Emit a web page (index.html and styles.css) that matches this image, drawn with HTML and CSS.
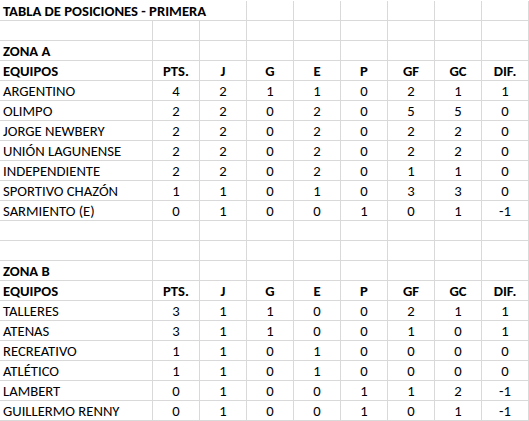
FILE: index.html
```html
<!DOCTYPE html>
<html lang="es">
<head>
<meta charset="utf-8">
<title>Tabla de posiciones - Primera</title>
<link rel="stylesheet" href="styles.css">
</head>
<body>
<div class="sheet">
  <div class="row title-row"><div class="title">TABLA DE POSICIONES - PRIMERA</div><div class="c"></div><div class="c"></div><div class="c"></div><div class="c"></div><div class="c"></div><div class="c"></div></div>
  <div class="row"><div class="a"></div><div class="c"></div><div class="c"></div><div class="c"></div><div class="c"></div><div class="c"></div><div class="c"></div><div class="c"></div><div class="c"></div></div>
  <div class="row"><div class="a b">ZONA A</div><div class="c"></div><div class="c"></div><div class="c"></div><div class="c"></div><div class="c"></div><div class="c"></div><div class="c"></div><div class="c"></div></div>
  <div class="row head"><div class="a">EQUIPOS</div><div class="c">PTS.</div><div class="c">J</div><div class="c">G</div><div class="c">E</div><div class="c">P</div><div class="c">GF</div><div class="c">GC</div><div class="c">DIF.</div></div>
  <div class="row"><div class="a">ARGENTINO</div><div class="c">4</div><div class="c">2</div><div class="c">1</div><div class="c">1</div><div class="c">0</div><div class="c">2</div><div class="c">1</div><div class="c">1</div></div>
  <div class="row"><div class="a">OLIMPO</div><div class="c">2</div><div class="c">2</div><div class="c">0</div><div class="c">2</div><div class="c">0</div><div class="c">5</div><div class="c">5</div><div class="c">0</div></div>
  <div class="row"><div class="a">JORGE NEWBERY</div><div class="c">2</div><div class="c">2</div><div class="c">0</div><div class="c">2</div><div class="c">0</div><div class="c">2</div><div class="c">2</div><div class="c">0</div></div>
  <div class="row"><div class="a">UNIÓN LAGUNENSE</div><div class="c">2</div><div class="c">2</div><div class="c">0</div><div class="c">2</div><div class="c">0</div><div class="c">2</div><div class="c">2</div><div class="c">0</div></div>
  <div class="row"><div class="a">INDEPENDIENTE</div><div class="c">2</div><div class="c">2</div><div class="c">0</div><div class="c">2</div><div class="c">0</div><div class="c">1</div><div class="c">1</div><div class="c">0</div></div>
  <div class="row"><div class="a">SPORTIVO CHAZÓN</div><div class="c">1</div><div class="c">1</div><div class="c">0</div><div class="c">1</div><div class="c">0</div><div class="c">3</div><div class="c">3</div><div class="c">0</div></div>
  <div class="row"><div class="a">SARMIENTO (E)</div><div class="c">0</div><div class="c">1</div><div class="c">0</div><div class="c">0</div><div class="c">1</div><div class="c">0</div><div class="c">1</div><div class="c">-1</div></div>
  <div class="row"><div class="a"></div><div class="c"></div><div class="c"></div><div class="c"></div><div class="c"></div><div class="c"></div><div class="c"></div><div class="c"></div><div class="c"></div></div>
  <div class="row"><div class="a"></div><div class="c"></div><div class="c"></div><div class="c"></div><div class="c"></div><div class="c"></div><div class="c"></div><div class="c"></div><div class="c"></div></div>
  <div class="row"><div class="a b">ZONA B</div><div class="c"></div><div class="c"></div><div class="c"></div><div class="c"></div><div class="c"></div><div class="c"></div><div class="c"></div><div class="c"></div></div>
  <div class="row head"><div class="a">EQUIPOS</div><div class="c">PTS.</div><div class="c">J</div><div class="c">G</div><div class="c">E</div><div class="c">P</div><div class="c">GF</div><div class="c">GC</div><div class="c">DIF.</div></div>
  <div class="row"><div class="a">TALLERES</div><div class="c">3</div><div class="c">1</div><div class="c">1</div><div class="c">0</div><div class="c">0</div><div class="c">2</div><div class="c">1</div><div class="c">1</div></div>
  <div class="row"><div class="a">ATENAS</div><div class="c">3</div><div class="c">1</div><div class="c">1</div><div class="c">0</div><div class="c">0</div><div class="c">1</div><div class="c">0</div><div class="c">1</div></div>
  <div class="row"><div class="a">RECREATIVO</div><div class="c">1</div><div class="c">1</div><div class="c">0</div><div class="c">1</div><div class="c">0</div><div class="c">0</div><div class="c">0</div><div class="c">0</div></div>
  <div class="row"><div class="a">ATLÉTICO</div><div class="c">1</div><div class="c">1</div><div class="c">0</div><div class="c">1</div><div class="c">0</div><div class="c">0</div><div class="c">0</div><div class="c">0</div></div>
  <div class="row"><div class="a">LAMBERT</div><div class="c">0</div><div class="c">1</div><div class="c">0</div><div class="c">0</div><div class="c">1</div><div class="c">1</div><div class="c">2</div><div class="c">-1</div></div>
  <div class="row"><div class="a">GUILLERMO RENNY</div><div class="c">0</div><div class="c">1</div><div class="c">0</div><div class="c">0</div><div class="c">1</div><div class="c">0</div><div class="c">1</div><div class="c">-1</div></div>
</div>
</body>
</html>
```
FILE: styles.css
```css
html, body {
  margin: 0;
  padding: 0;
  background: #ffffff;
}

.sheet {
  padding-top: 1px;
  width: 529px;
  font-family: Carlito, Calibri, Lato, "Open Sans", sans-serif;
  font-size: 14.67px;
  color: #000000;
}

.row {
  display: grid;
  grid-template-columns: 153px repeat(8, 47px);
  height: 20px;
}

.row > div {
  box-sizing: border-box;
  height: 20px;
  border-right: 1px solid #d9d9d9;
  border-bottom: 1px solid #d9d9d9;
  line-height: 21px;
  white-space: nowrap;
  overflow: visible;
}

.a {
  padding-left: 3px;
}

.c {
  text-align: center;
}

.b,
.head > div,
.title {
  font-weight: bold;
}

.title-row {
  grid-template-columns: 247px repeat(6, 47px);
}

.title {
  padding-left: 3px;
}
```
